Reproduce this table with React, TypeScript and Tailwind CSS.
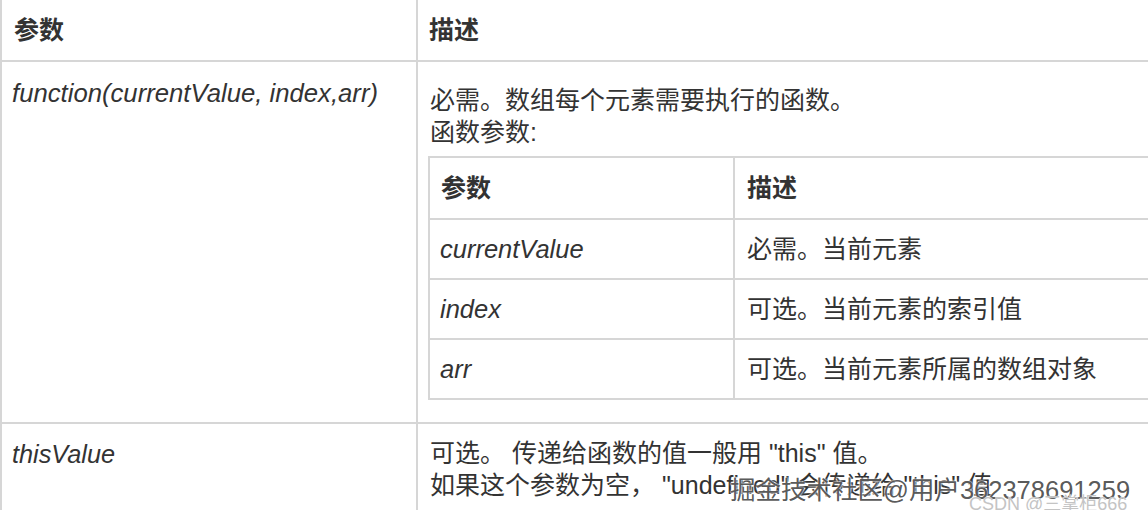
import React from 'react';

const line = "border-[#d6d6d6]";

const subRows = [
  { name: "currentValue", desc: "必需。当前元素" },
  { name: "index", desc: "可选。当前元素的索引值" },
  { name: "arr", desc: "可选。当前元素所属的数组对象" },
];

export default function App() {
  return (
    <div className="relative w-[1148px] h-[510px] overflow-hidden bg-white text-[#333] text-[25px] leading-[32px] font-['Liberation_Sans','Noto_Sans_CJK_SC',sans-serif]">
      <div className={`w-[1400px] border-l-2 ${line}`}>
        {/* header */}
        <div className={`grid grid-cols-[416px_1fr] border-b-2 ${line}`}>
          <div className={`h-[60px] flex items-center pl-3 font-bold border-r-2 ${line}`}>参数</div>
          <div className="h-[60px] flex items-center pl-[11px] font-bold">描述</div>
        </div>

        {/* callback row */}
        <div className={`grid grid-cols-[416px_1fr] border-b-2 ${line}`}>
          <div className={`pt-[15px] pl-[10px] italic text-[25.7px] border-r-2 ${line}`}>function(currentValue, index,arr)</div>
          <div className="pt-[22px] pl-[10px] pb-[22px]">
            <p className="pl-[2px]">必需。数组每个元素需要执行的函数。</p>
            <p className="pl-[2px]">函数参数:</p>
            <div className={`mt-[8px] border-t-2 border-l-2 ${line}`}>
              <div className={`grid grid-cols-[305px_1fr] border-b-2 ${line}`}>
                <div className={`h-[60px] flex items-center pl-[11px] font-bold border-r-2 ${line}`}>参数</div>
                <div className="h-[60px] flex items-center pl-3 font-bold">描述</div>
              </div>
              {subRows.map((r) => (
                <div key={r.name} className={`grid grid-cols-[305px_1fr] border-b-2 ${line}`}>
                  <div className={`h-[58px] flex items-center pl-[10px] italic text-[25.5px] border-r-2 ${line}`}>{r.name}</div>
                  <div className="h-[58px] flex items-center pl-3">{r.desc}</div>
                </div>
              ))}
            </div>
          </div>
        </div>

        {/* thisValue row */}
        <div className="grid grid-cols-[416px_1fr] h-[120px]">
          <div className={`pt-[14px] pl-[10px] italic text-[25.3px] border-r-2 ${line}`}>thisValue</div>
          <div className="pt-[13px] pl-3">
            <p>可选。 传递给函数的值一般用 "this" 值。</p>
            <p>如果这个参数为空， "undefined" 会传递给 "this" 值</p>
          </div>
        </div>
      </div>

      {/* watermarks */}
      <div className="absolute left-[730px] top-[475px] text-[25.5px] leading-[30px] text-[#444]/90 [text-shadow:0_0_2px_#fff,0_0_2px_#fff]">
        掘金技术社区@用户362378691259
      </div>
      <div className="absolute left-[969px] top-[493px] text-[18px] leading-[22px] text-[#c4c4c4] [text-shadow:0_0_1px_#fff]">
        CSDN @三掌柜666
      </div>
    </div>
  );
}
